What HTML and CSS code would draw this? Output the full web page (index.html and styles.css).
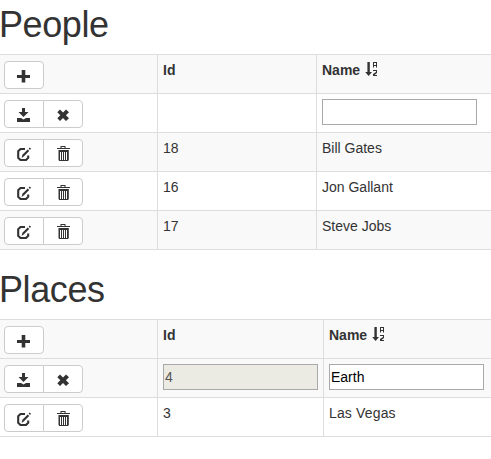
FILE: index.html
```html
<!DOCTYPE html>
<html lang="en">
<head>
<meta charset="utf-8">
<title>People and Places</title>
<link rel="stylesheet" href="styles.css">
</head>
<body>
<svg class="sprite" aria-hidden="true">
  <symbol id="plus" viewBox="0 0 14 15"><path d="M4.700 2h3.600v5H13v3H8.300v4.500H4.700V10H0V7h4.700z"/></symbol>
  <symbol id="save" viewBox="0 0 14 15"><path d="M5 1h3v4h3.500L6.500 10 1.500 5H5zM0 11h4l2.500 1.500L9 11h4v4H0z"/></symbol>
  <symbol id="cancel" viewBox="0 0 14 15"><path d="M4 2.600 7 5.600l3-3L13 5.300 9.900 8.300l3.100 3L10 14l-3-3-3 3-2.700-2.700 3-3-3-3z"/></symbol>
  <symbol id="edit" viewBox="0 0 14 15"><path d="M8 3H3.500L1.200 5.300v6.400L3.500 14H9l2.200-2.200V9.500" fill="none" stroke="currentColor" stroke-width="2.100"/><path d="M4.600 12l.8-3.200L10.700 3.500l1.500 1.500L7 10.200zM11.700 2.600l1.100-1.100L14 2.800l-1.100 1.100z"/></symbol>
  <symbol id="trash" viewBox="0 0 14 15"><path d="M1 2h3.500V0h5v2H14v1H1zM5.500 1v1h3V1zM2.500 4h10.300v10l-.8 1H3.300l-.8-1zM4 6v8h1V6zM6 6v8h1V6zM8 6v8h1V6zM10 6v8h1V6z" fill-rule="evenodd"/></symbol>
  <symbol id="sort" viewBox="0 0 14 15"><path d="M2.400 0h2.400v10H7l-3.400 4L.2 10h2.200zM8 0h4v5.500h-1V4H9v1.500H8zM9 1v2h2V1zM8 8h4v3l-2.500 2H12v1H8v-2l3-2V9H8z" fill-rule="evenodd"/></symbol>
</svg>
<main>
  <section>
    <h1>People</h1>
    <div class="table people">
      <div class="row head shaded">
        <div class="actions"><button class="btn" aria-label="Add"><svg><use href="#plus"/></svg></button></div>
        <div class="cell">Id</div>
        <div class="cell">Name <svg class="sort"><use href="#sort"/></svg></div>
      </div>
      <div class="row">
        <div class="actions"><button class="btn" aria-label="Save"><svg><use href="#save"/></svg></button><button class="btn" aria-label="Cancel"><svg><use href="#cancel"/></svg></button></div>
        <div class="cell"></div>
        <div class="cell"><input type="text" aria-label="Name"></div>
      </div>
      <div class="row shaded">
        <div class="actions"><button class="btn" aria-label="Edit"><svg><use href="#edit"/></svg></button><button class="btn" aria-label="Delete"><svg><use href="#trash"/></svg></button></div>
        <div class="cell">18</div>
        <div class="cell">Bill Gates</div>
      </div>
      <div class="row">
        <div class="actions"><button class="btn" aria-label="Edit"><svg><use href="#edit"/></svg></button><button class="btn" aria-label="Delete"><svg><use href="#trash"/></svg></button></div>
        <div class="cell">16</div>
        <div class="cell">Jon Gallant</div>
      </div>
      <div class="row shaded">
        <div class="actions"><button class="btn" aria-label="Edit"><svg><use href="#edit"/></svg></button><button class="btn" aria-label="Delete"><svg><use href="#trash"/></svg></button></div>
        <div class="cell">17</div>
        <div class="cell">Steve Jobs</div>
      </div>
    </div>
  </section>
  <section>
    <h1>Places</h1>
    <div class="table places">
      <div class="row head shaded">
        <div class="actions"><button class="btn" aria-label="Add"><svg><use href="#plus"/></svg></button></div>
        <div class="cell">Id</div>
        <div class="cell">Name <svg class="sort"><use href="#sort"/></svg></div>
      </div>
      <div class="row shaded">
        <div class="actions"><button class="btn" aria-label="Save"><svg><use href="#save"/></svg></button><button class="btn" aria-label="Cancel"><svg><use href="#cancel"/></svg></button></div>
        <div class="cell"><input type="text" value="4" aria-label="Id" disabled></div>
        <div class="cell"><input type="text" value="Earth" aria-label="Name"></div>
      </div>
      <div class="row">
        <div class="actions"><button class="btn" aria-label="Edit"><svg><use href="#edit"/></svg></button><button class="btn" aria-label="Delete"><svg><use href="#trash"/></svg></button></div>
        <div class="cell">3</div>
        <div class="cell places-name">Las Vegas</div>
      </div>
    </div>
  </section>
</main>
</body>
</html>
```
FILE: styles.css
```css
* {
  box-sizing: border-box;
}

body {
  margin: 0;
  background: #fff;
  color: #333;
  font: 14px/20px "Liberation Sans", Arial, sans-serif;
}

.sprite {
  display: none;
}

main {
  display: flex;
  flex-direction: column;
  gap: 20px;
  padding-top: 5px;
}

h1 {
  margin: 0 0 9px -1px;
  font-size: 36px;
  font-weight: 400;
  line-height: 40px;
  letter-spacing: -0.4px;
}

.table {
  border-bottom: 1px solid #ddd;
}

.row {
  display: grid;
  height: 39px;
  border-top: 1px solid #ddd;
}

.people .row {
  grid-template-columns: 157px 159px 1fr;
}

.places .row {
  grid-template-columns: 157px 166px 1fr;
}

.shaded {
  background: #f9f9f9;
}

.head {
  font-weight: 700;
}

.actions {
  display: flex;
  align-items: flex-start;
  padding: 6px 4px 0;
}

.cell {
  padding: 5px 5px 0;
  border-left: 1px solid #ddd;
  white-space: nowrap;
}

.places-name {
  letter-spacing: 0.15px;
}

.btn {
  width: 40px;
  height: 28px;
  padding: 6px 12px 5px;
  border: 1px solid #ccc;
  border-radius: 4px;
  background: #fff;
  color: #333;
}

.btn:not(:last-child) {
  border-radius: 4px 0 0 4px;
}

.btn + .btn {
  margin-left: -1px;
  border-radius: 0 4px 4px 0;
}

svg {
  display: block;
  width: 14px;
  height: 15px;
  fill: currentColor;
}

.sort {
  display: inline-block;
  margin-left: 1px;
  vertical-align: -2px;
}

input {
  display: block;
  width: 155px;
  height: 26px;
  margin: 0;
  padding: 1px;
  border: 1px solid #a9a9a9;
  border-radius: 0;
  background: #fff;
  color: #000;
  font: inherit;
}

input:disabled {
  background: #ebebe4;
  color: #545454;
}
```
